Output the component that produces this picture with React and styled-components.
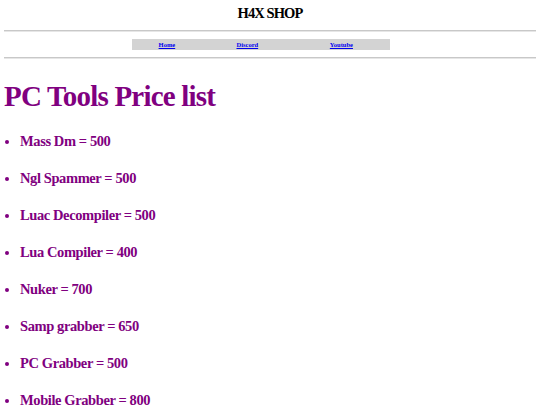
import React from "react";
import styled, { createGlobalStyle } from "styled-components";

const GlobalStyle = createGlobalStyle`
    body {
        margin: 4px;
        background: #ffffff;
        font-family: "Liberation Serif", "Times New Roman", serif;
    }
`;

const items = [
    "Mass Dm = 500",
    "Ngl Spammer = 500",
    "Luac Decompiler = 500",
    "Lua Compiler = 400",
    "Nuker = 700",
    "Samp grabber = 650",
    "PC Grabber = 500",
    "Mobile Grabber = 800",
];

const App = () => {
    return (
        <Page>
            <GlobalStyle />
            <ShopTitle>H4X SHOP</ShopTitle>
            <Rule />
            <NavTable>
                <tbody>
                    <tr>
                        <NavCell><NavLink href="#">Home</NavLink></NavCell>
                        <NavCell><NavLink href="#">Discord</NavLink></NavCell>
                        <NavCell><NavLink href="#">Youtube</NavLink></NavCell>
                    </tr>
                </tbody>
            </NavTable>
            <Rule />
            <PageTitle>PC Tools Price list</PageTitle>
            <PriceList>
                {items.map((item) => (
                    <PriceItem key={item}>{item}</PriceItem>
                ))}
            </PriceList>
        </Page>
    );
};

export default App;

const Page = styled.div`
    display: flex;
    flex-direction: column;
`;

const ShopTitle = styled.h3`
    margin: 0;
    font-size: 14.5px;
    line-height: 19px;
    letter-spacing: -0.9px;
    font-weight: bold;
    text-align: center;
    color: #000000;
`;

const Rule = styled.hr`
    width: 100%;
    margin: 7px 0;
    border: none;
    border-top: 1px solid #c8c8c8;
    border-bottom: 1px solid #e6e6e6;
`;

const NavTable = styled.table`
    align-self: flex-start;
    width: 258px;
    height: 11px;
    margin: 0 0 0 128px;
    background: #d3d3d3;
    border-collapse: collapse;
`;

const NavCell = styled.td`
    padding: 0;
    text-align: center;
    font-size: 6.5px;
    line-height: 11px;
    font-weight: bold;
`;

const NavLink = styled.a`
    color: #0000ee;
    text-decoration: underline;
`;

const PageTitle = styled.h1`
    margin: 13px 0 0 0;
    font-size: 29px;
    line-height: 34px;
    letter-spacing: -0.8px;
    font-weight: bold;
    color: #800080;
`;

const PriceList = styled.ul`
    margin: 20px 0 0 0;
    padding-left: 16px;
    list-style: disc;
`;

const PriceItem = styled.li`
    font-size: 14.5px;
    line-height: 17px;
    letter-spacing: -0.4px;
    font-weight: bold;
    color: #800080;
    margin-bottom: 20px;
`;
